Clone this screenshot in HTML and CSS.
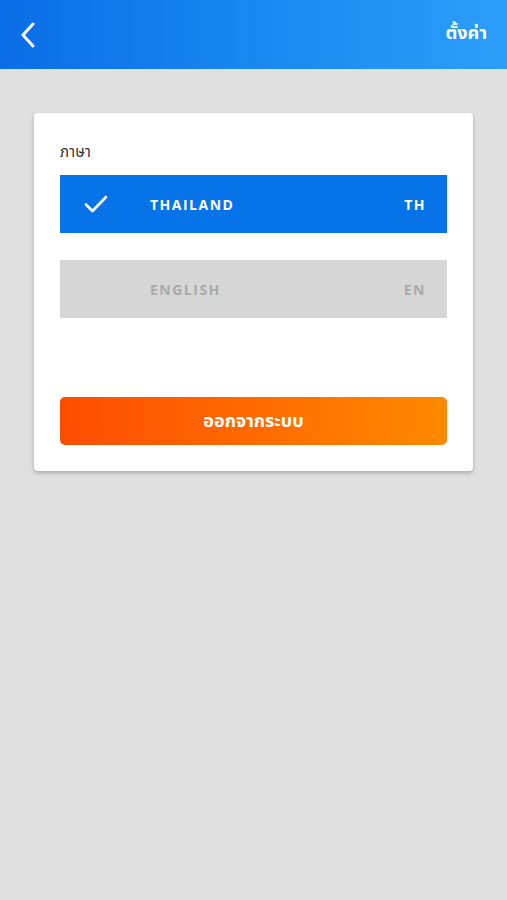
FILE: index.html
```html
<!DOCTYPE html>
<html lang="th">
<head>
    <meta charset="UTF-8">
    <meta name="viewport" content="width=device-width, initial-scale=1.0">
    <title>ตั้งค่า</title>
    <link rel="stylesheet" href="styles.css">
</head>
<body>
    <header class="topbar">
        <a class="back-btn" href="#">
            <svg width="16" height="26" viewBox="0 0 16 26">
                <path d="M13 2 L3 13 L13 24" fill="none" stroke="#fff" stroke-width="3" stroke-linecap="round" stroke-linejoin="round"/>
            </svg>
        </a>
        <span class="topbar-title">ตั้งค่า</span>
    </header>

    <section class="settings-page">
        <div class="settings-card">
            <p class="section-label">ภาษา</p>

            <!-- Language options -->
            <div class="lang-list">
                <div class="lang-option active">
                    <span class="lang-check">
                        <svg width="24" height="18" viewBox="0 0 24 18">
                            <path d="M2 9.5 L8.5 16 L22 2" fill="none" stroke="#fff" stroke-width="2.6" stroke-linecap="round" stroke-linejoin="round"/>
                        </svg>
                    </span>
                    <span class="lang-name">THAILAND</span>
                    <span class="lang-code">TH</span>
                </div>
                <div class="lang-option">
                    <span class="lang-check"></span>
                    <span class="lang-name">ENGLISH</span>
                    <span class="lang-code">EN</span>
                </div>
            </div>

            <button class="logout-btn">ออกจากระบบ</button>
        </div>
    </section>
</body>
</html>
```

FILE: styles.css
```css
/* Reset some default styles */
* {
    margin: 0;
    padding: 0;
    box-sizing: border-box;
}

body {
    font-family: "Open Sans", "Noto Sans", "Noto Sans Thai", sans-serif;
    background-color: #e0e0e0;
    min-height: 900px;
}

/* Header Styles */
.topbar {
    height: 69px;
    display: flex;
    align-items: center;
    justify-content: space-between;
    padding: 0 20px 0 20px;
    background: linear-gradient(90deg, #0a6de6 0%, #1785ef 45%, #2c9ef9 100%);
    color: #fff;
}

.back-btn {
    display: flex;
    align-items: center;
    height: 26px;
    margin-top: 1px;
}

.topbar-title {
    font-size: 18px;
    font-weight: bold;
    margin-top: -2px;
}

/* Settings card */
.settings-page {
    padding: 44px 34px 0 34px;
}

.settings-card {
    background-color: #fff;
    border-radius: 4px;
    box-shadow: 0 2px 4px rgba(0, 0, 0, 0.25);
    padding: 28px 26px 26px 26px;
}

.section-label {
    font-size: 15px;
    color: #333;
    line-height: 20px;
    margin-bottom: 14px;
}

.lang-list {
    display: flex;
    flex-direction: column;
    gap: 27px;
}

.lang-option {
    height: 58px;
    display: flex;
    align-items: center;
    padding: 0 21px 0 24px;
    background-color: #d6d6d6;
    color: #a9a9a9;
    font-weight: bold;
    font-size: 14px;
    letter-spacing: 1.5px;
}

.lang-option.active {
    background-color: #0773e8;
    color: #fff;
}

.lang-check {
    width: 66px;
    display: flex;
    align-items: center;
}

.lang-name {
    flex: 1;
}

.logout-btn {
    display: block;
    width: 100%;
    height: 48px;
    margin-top: 79px;
    border: none;
    border-radius: 5px;
    background: linear-gradient(90deg, #ff4d00 0%, #ff6a00 50%, #ff8a00 100%);
    color: #fff;
    font-family: inherit;
    font-size: 18px;
    font-weight: bold;
}
```
